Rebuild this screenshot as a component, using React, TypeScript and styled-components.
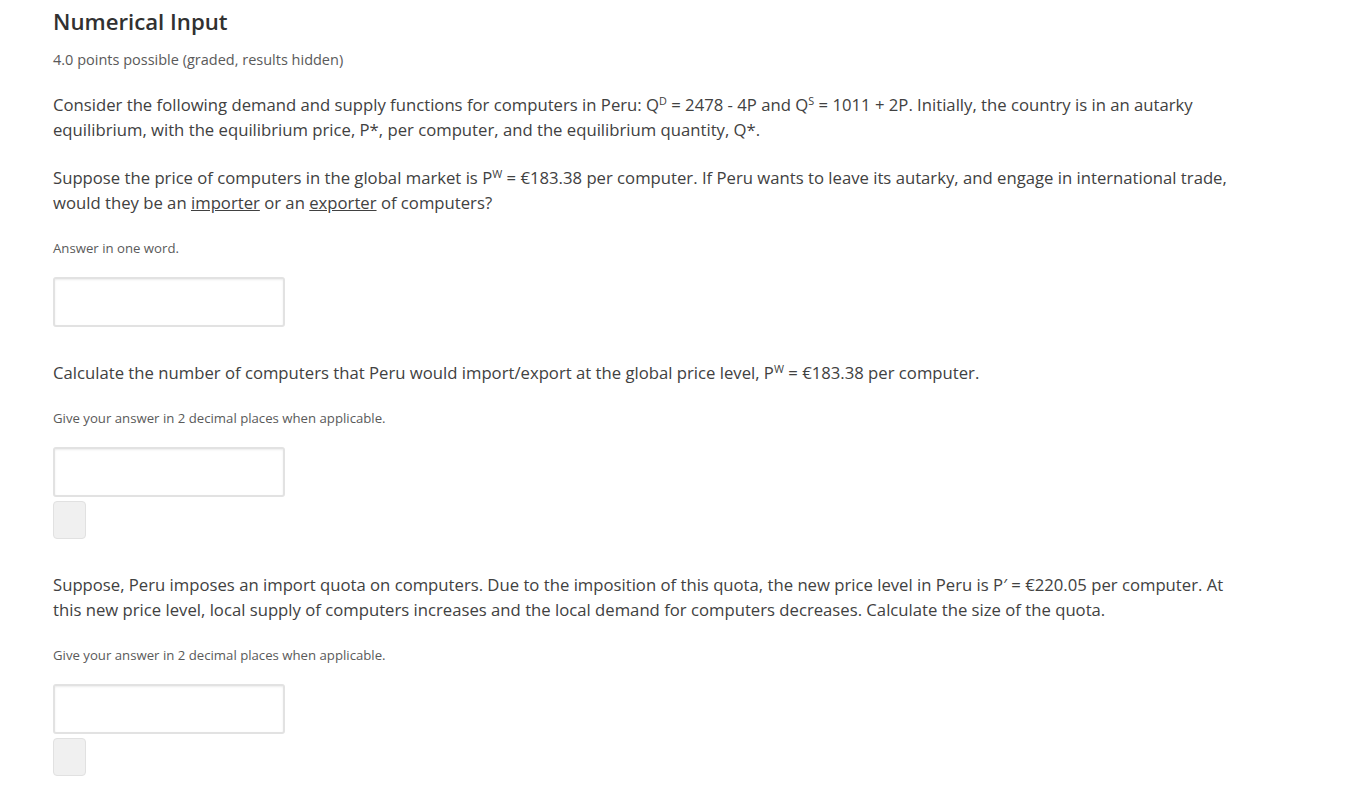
import React from "react";
import styled, { createGlobalStyle } from "styled-components";

const GlobalStyle = createGlobalStyle`
  html, body {
    margin: 0;
    padding: 0;
    background: #ffffff;
  }
  body {
    font-family: "Open Sans", "Noto Sans", sans-serif;
    color: #414141;
  }
`;

const Page = styled.div`
  padding: 6px 53px 10px;
`;

const Title = styled.h3`
  margin: 0;
  font-size: 22.2px;
  line-height: 32px;
  font-weight: 600;
  color: #313131;
`;

const Points = styled.div`
  margin-top: 12px;
  font-size: 14.5px;
  line-height: 20px;
  color: #5a5a5a;
`;

const Question = styled.p<{ $top: number }>`
  margin: ${(p) => p.$top}px 0 0;
  font-size: 16.7px;
  line-height: 25px;
  max-width: 1188px;
`;

const Hint = styled.div`
  margin-top: 23px;
  font-size: 13.2px;
  line-height: 20px;
  color: #5a5a5a;
`;

const Field = styled.input`
  display: block;
  box-sizing: border-box;
  margin-top: 19px;
  width: 232px;
  height: 50px;
  border: 2px solid #e2e2e2;
  border-radius: 3px;
  box-shadow: inset 0 1px 2px rgba(0, 0, 0, 0.08);
  background: #fff;
  padding: 0 10px;
  font: inherit;
  outline: none;
`;

const Status = styled.div`
  margin-top: 4px;
  box-sizing: border-box;
  width: 33px;
  height: 38px;
  background: #f0f0f0;
  border: 1px solid #e1e1e1;
  border-radius: 4px;
`;

const Link = styled.span`
  text-decoration: underline;
  text-underline-offset: 1px;
`;

const Sup = styled.sup`
  font-size: 0.65em;
  line-height: 0;
  vertical-align: 0.55em;
`;

export default function App() {
  return (
    <>
      <GlobalStyle />
      <Page>
        <Title>Numerical Input</Title>
        <Points>4.0 points possible (graded, results hidden)</Points>

        <Question $top={22}>
          Consider the following demand and supply functions for computers in Peru: Q<Sup>D</Sup> = 2478 - 4P and Q
          <Sup>S</Sup> = 1011 + 2P. Initially, the country is in an autarky equilibrium, with the equilibrium price,
          P*, per computer, and the equilibrium quantity, Q*.
        </Question>
        <Question $top={23}>
          Suppose the price of computers in the global market is P<Sup>W</Sup> = €183.38 per computer. If Peru wants
          to leave its autarky, and engage in international trade, would they be an <Link>importer</Link> or an{" "}
          <Link>exporter</Link> of computers?
        </Question>
        <Hint>Answer in one word.</Hint>
        <Field aria-label="answer 1" />

        <Question $top={33}>
          Calculate the number of computers that Peru would import/export at the global price level, P<Sup>W</Sup> =
          €183.38 per computer.
        </Question>
        <Hint>Give your answer in 2 decimal places when applicable.</Hint>
        <Field aria-label="answer 2" />
        <Status />

        <Question $top={33}>
          Suppose, Peru imposes an import quota on computers. Due to the imposition of this quota, the new price level
          in Peru is P′ = €220.05 per computer. At this new price level, local supply of computers increases and the
          local demand for computers decreases. Calculate the size of the quota.
        </Question>
        <Hint>Give your answer in 2 decimal places when applicable.</Hint>
        <Field aria-label="answer 3" />
        <Status />
      </Page>
    </>
  );
}
